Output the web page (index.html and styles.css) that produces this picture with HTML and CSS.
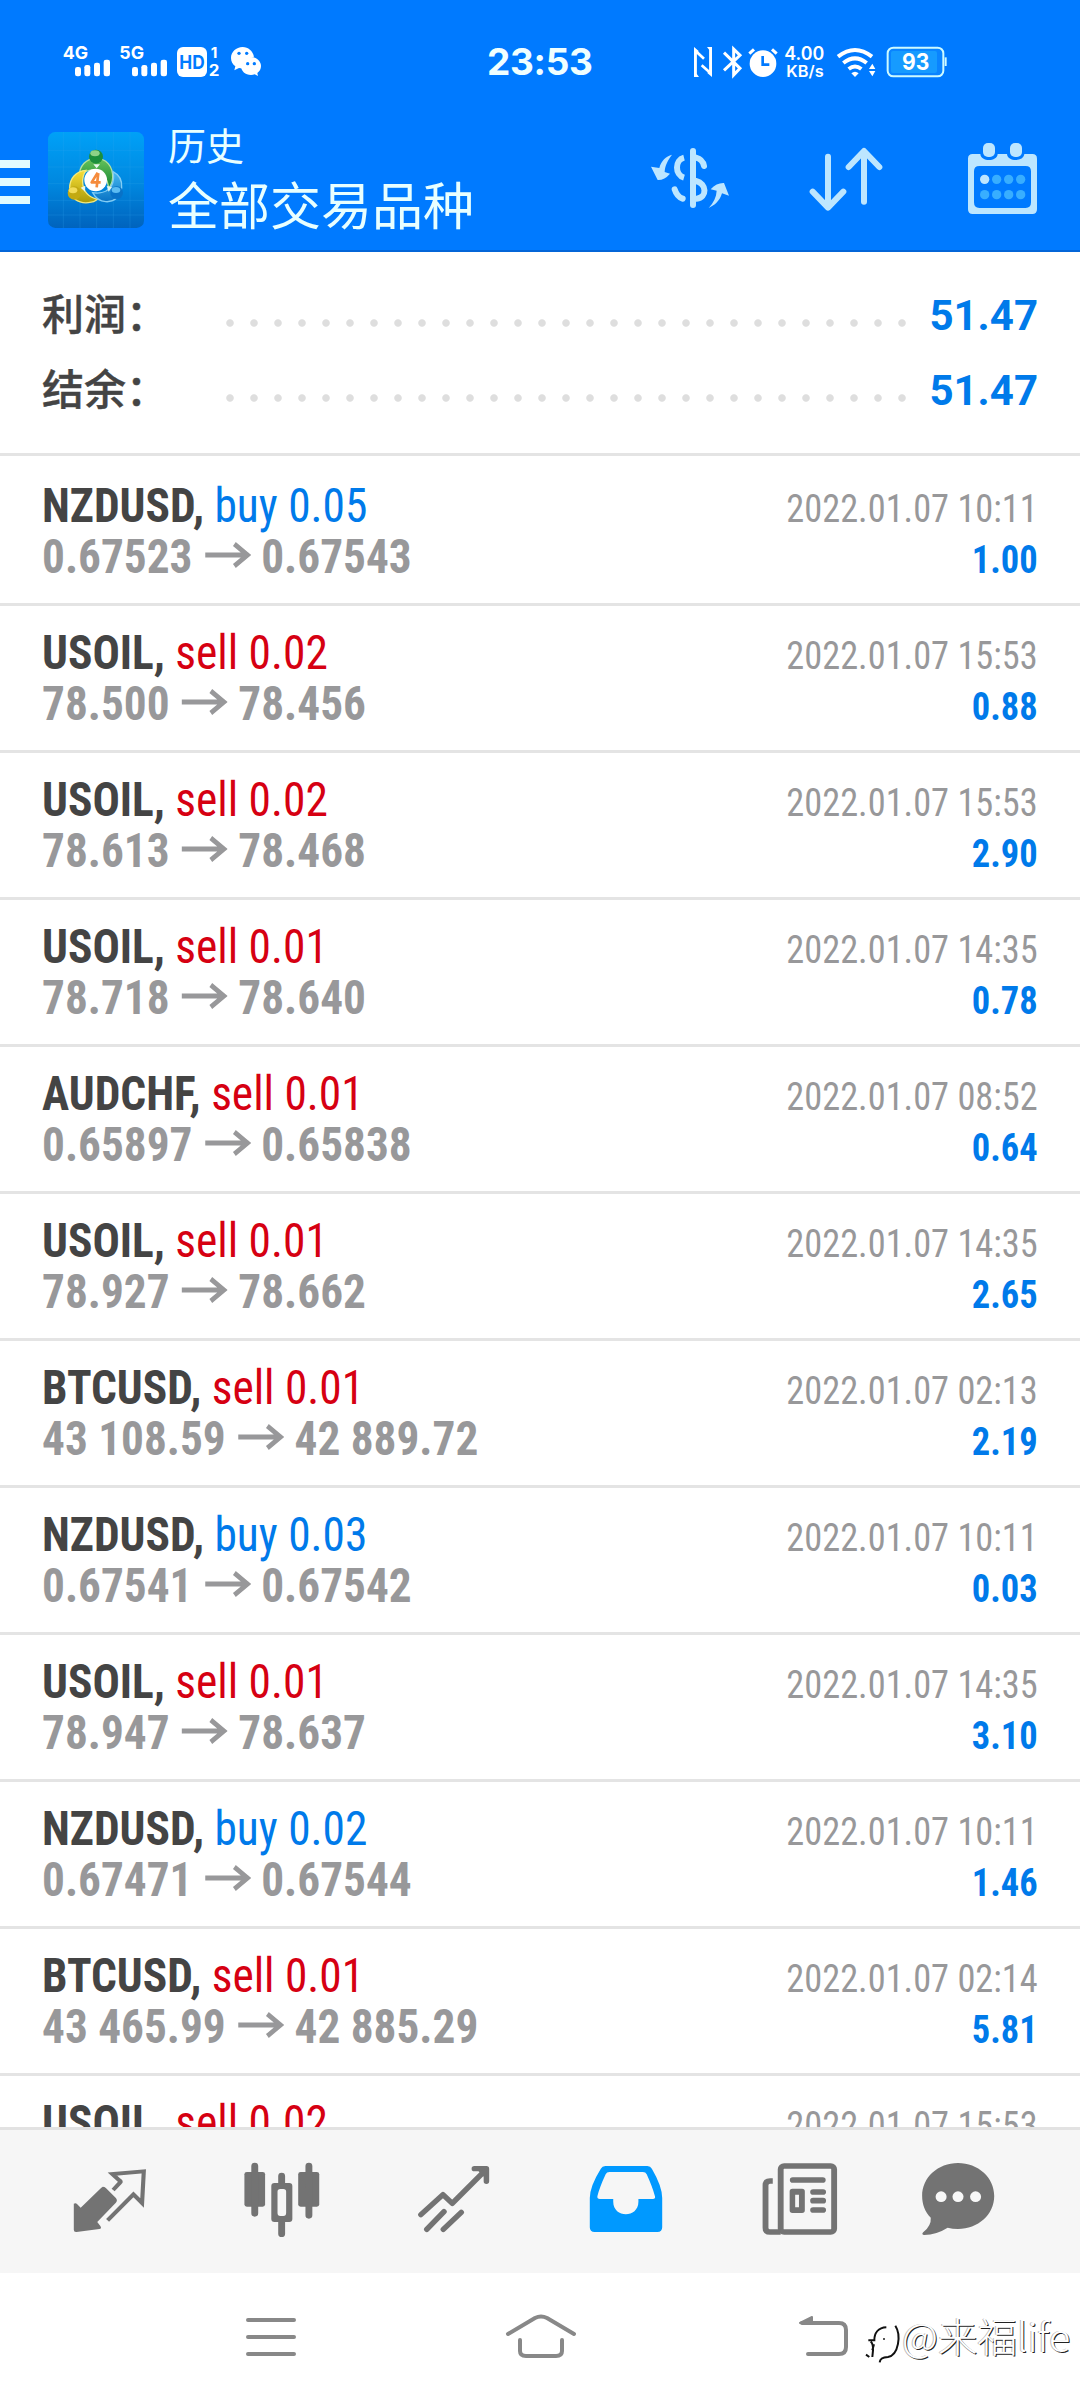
FILE: index.html
```html
<!DOCTYPE html>
<html lang="zh-CN">
<head>
<meta charset="utf-8">
<title>历史</title>
<link rel="stylesheet" href="styles.css">
</head>
<body>
<div class="screen">
  <header class="header">
    <div class="status">
      <svg class="status-left" width="202" height="34" viewBox="183 72 606 102" fill="#fff">
        <text x="188" y="117" font-size="54" textLength="76" lengthAdjust="spacingAndGlyphs" class="din">4G</text>
        <rect x="225" y="141" width="18" height="28" rx="7"/><rect x="253" y="135" width="18" height="34" rx="7"/><rect x="282" y="128" width="18" height="41" rx="7"/><rect x="311" y="119" width="19" height="50" rx="7"/>
        <text x="358" y="117" font-size="54" textLength="74" lengthAdjust="spacingAndGlyphs" class="din">5G</text>
        <rect x="396" y="141" width="18" height="28" rx="7"/><rect x="424" y="135" width="18" height="34" rx="7"/><rect x="453" y="128" width="18" height="41" rx="7"/><rect x="482" y="119" width="19" height="50" rx="7"/>
        <rect x="531" y="81" width="90" height="90" rx="18"/>
        <text x="538" y="146" font-size="56" fill="#007aff" textLength="76" lengthAdjust="spacingAndGlyphs" class="din">HD</text>
        <text x="632" y="115" font-size="44" textLength="20" lengthAdjust="spacingAndGlyphs" class="din">1</text>
        <text x="626" y="168" font-size="46" textLength="32" lengthAdjust="spacingAndGlyphs" class="din">2</text>
        <path d="M728 81c-20 0-35 15-35 33 0 11 5 19 13 25l-3 12 14-7c5 1 9 2 14 1-1-18 12-33 31-35-4-17-17-29-34-29z"/>
        <path d="M753 111c-17 0-30 12-30 27s13 27 30 27c4 0 8-1 11-2l10 5-2-9c7-5 11-12 11-21 0-15-13-27-30-27z"/>
        <g fill="#007aff"><circle cx="717" cy="100" r="5"/><circle cx="740" cy="100" r="5"/><circle cx="743" cy="131" r="5"/><circle cx="763" cy="131" r="5"/></g>
      </svg>
      <span class="clock">23:53</span>
      <svg class="status-right" width="256" height="34" viewBox="156 72 768 102" fill="#fff">
        <path d="M166 171V92l26 24M212 81v79l-27-24" fill="none" stroke="#fff" stroke-width="8"/>
        <path d="M162 81l14 12-6 8v60l7 10h-9l-6-5zM216 171l-14-12 6-8V90l-7-9h9l6 5z"/>
        <path d="M252 98l48 47-19 20V87l19 19-48 45" fill="none" stroke="#fff" stroke-width="9"/>
        <circle cx="369" cy="131" r="40"/><path d="M328 101l14-13M410 101l-14-13" stroke="#fff" stroke-width="9"/>
        <path d="M368 108v26h20" fill="none" stroke="#007aff" stroke-width="8"/>
        <text x="433" y="121" font-size="54" textLength="120" lengthAdjust="spacingAndGlyphs" class="semi">4.00</text>
        <text x="439" y="171" font-size="46" textLength="112" lengthAdjust="spacingAndGlyphs" class="semi">KB/s</text>
        <path d="M594 110q51-40 102 0M610 129q35-28 70 0M626 147q19-15 38 0" fill="none" stroke="#fff" stroke-width="12"/>
        <path d="M634 160q11-9 22 0l-11 11zM687 147l10-16 9 16zM687 153l10 16 9-16z"/>
        <rect x="743" y="83" width="167" height="86" rx="17" fill="#0a84ff" stroke="#cdfaff" stroke-width="6"/>
        <rect x="753" y="93" width="138" height="66" rx="6" fill="#169bff"/>
        <path d="M917 112v26" stroke="#cdfaff" stroke-width="6"/>
        <text x="786" y="150" font-size="68" textLength="82" lengthAdjust="spacingAndGlyphs" class="din">93</text>
      </svg>
    </div>
    <div class="toolbar">
      <div class="burger"><i></i><i></i><i></i></div>
      <svg class="app-icon" width="96" height="96" viewBox="24 21 288 288">
        <defs>
          <linearGradient id="tile" x1="0" y1="0" x2="0" y2="1"><stop offset="0" stop-color="#00a1f7"/><stop offset=".55" stop-color="#0087df"/><stop offset="1" stop-color="#0063bd"/></linearGradient>
          <linearGradient id="green" x1="0" y1="0" x2="0" y2="1"><stop offset="0" stop-color="#67c35b"/><stop offset="1" stop-color="#128533"/></linearGradient>
          <linearGradient id="gold" x1="0" y1="0" x2="0" y2="1"><stop offset="0" stop-color="#f8de38"/><stop offset="1" stop-color="#a99a08"/></linearGradient>
          <linearGradient id="sky" x1="0" y1="0" x2="0" y2="1"><stop offset="0" stop-color="#49baf1"/><stop offset="1" stop-color="#0872c4"/></linearGradient>
        </defs>
        <rect x="24" y="21" width="288" height="288" rx="22" fill="url(#tile)"/>
        <path d="M70 21v288M120 21v288M170 21v288M220 21v288M270 21v288M24 76h288M24 126h288M24 176h288M24 226h288M24 270h288" stroke="#32a7ee" stroke-opacity=".22" stroke-width="3"/>
        <g stroke-width="4">
          <path d="M118 153c0-31 21-53 50-53 30 0 51 23 50 58-1 15-6 25-12 31-4-29-20-49-44-54-16-2-28 4-44 18z" fill="url(#green)" stroke="#b3e1a0"/>
          <path d="M138 136c-30 2-50 25-49 55 0 28 26 45 56 42 13-1 22-5 27-10-27-7-42-24-44-49-1-15 2-26 10-38z" fill="url(#gold)" stroke="#f3e97d"/>
          <path d="M219 140c18 9 28 27 26 49-3 28-25 43-48 41-17-1-31-12-39-27 25 4 47-4 57-22 7-13 7-26 4-41z" fill="url(#sky)" stroke="#82cdf5"/>
        </g>
        <circle cx="168" cy="95" r="21" fill="#1c8f3c"/><ellipse cx="165" cy="85" rx="14" ry="9" fill="#8ed287"/>
        <circle cx="103" cy="204" r="20" fill="#c3aa12"/><ellipse cx="99" cy="196" rx="13" ry="9" fill="#f2dc5a"/>
        <circle cx="230" cy="203" r="19" fill="#0872c7"/><ellipse cx="228" cy="195" rx="13" ry="9" fill="#5cbcf2"/>
        <path d="M160 118h20l-10 12zM122 188l14-6-1 18zM200 183l16 3-10 14z" fill="#e8f7ee"/>
        <circle cx="167" cy="165" r="34" fill="#fff"/>
        <path d="M173 143l-18 29h27M175 144l-5 43" fill="none" stroke="#f58b3c" stroke-width="8" stroke-linejoin="round"/>
      </svg>
      <div class="titles">
        <div class="title">历史</div>
        <div class="subtitle">全部交易品种</div>
      </div>
      <div class="actions">
        <svg width="80" height="72" viewBox="30 366 240 216">
          <g fill="none" stroke="#bde6ff" stroke-width="18" stroke-linecap="round">
            <path d="M159 393V555"/>
            <path d="M168 413q20 5 24 25M168 483c33 8 34 50 2 53M104 508q7 22 24 28"/>
            <path d="M132 413c-28 7-28 52 0 60" stroke-linecap="butt"/>
          </g>
          <path d="M96 404c-18 4-33 19-38 40l-25-4 20 40q20 1 37-19l-16-5c1-20 10-36 22-52z" fill="#bde6ff"/>
          <path d="M206 564c18-8 33-21 40-44l21 7-15-38q-22-1-40 19l18 4c-1 19-9 36-24 52z" fill="#bde6ff"/>
        </svg>
        <svg width="76" height="72" viewBox="504 366 228 216">
          <path d="M564 410V562M518 515l46 48 46-48M672 545V394M626 441l46-48 46 48" fill="none" stroke="#bde6ff" stroke-width="18" stroke-linecap="round" stroke-linejoin="round"/>
        </svg>
        <svg width="71" height="72" viewBox="981 366 213 216">
          <path d="M998 402h23c2 24 50 24 52 0h28c2 24 50 24 52 0h24q14 0 14 14v152q0 14-14 14H998q-14 0-14-14V416q0-14 14-14zM1018 438q-16 0-16 16v93q0 17 16 17h139q16 0 16-17v-93q0-16-16-16z" fill="#bde6ff" fill-rule="evenodd"/>
          <rect x="1029" y="369" width="36" height="42" rx="15" fill="#bde6ff"/><rect x="1110" y="369" width="36" height="42" rx="15" fill="#bde6ff"/>
          <circle cx="1034" cy="478" r="14" fill="#bde6ff"/>
          <g fill="#38aeff"><circle cx="1070" cy="478" r="14"/><circle cx="1106" cy="478" r="14"/><circle cx="1142" cy="478" r="14"/><circle cx="1034" cy="524" r="14"/><circle cx="1070" cy="524" r="14"/><circle cx="1106" cy="524" r="14"/><circle cx="1142" cy="524" r="14"/></g>
        </svg>
      </div>
    </div>
  </header>

  <section class="summary">
    <div class="sum-row"><span class="label">利润：</span><span class="dots"></span><span class="total">51.47</span></div>
    <div class="sum-row"><span class="label">结余：</span><span class="dots"></span><span class="total">51.47</span></div>
  </section>

  <svg class="defs" width="0" height="0"><symbol id="arrow" viewBox="0 0 49 26" preserveAspectRatio="none"><path d="M0 13H46M31 2L45 13L31 24" fill="none" stroke="#98989a" stroke-width="4.8"/></symbol></svg>
  <main class="list">
    <div class="deal"><div class="line"><span class="order"><b>NZDUSD,</b> <span class="buy">buy 0.05</span></span><time>2022.01.07 10:11</time></div><div class="line"><span class="price">0.67523<svg class="arrow"><use href="#arrow"/></svg>0.67543</span><span class="profit">1.00</span></div></div>
    <div class="deal"><div class="line"><span class="order"><b>USOIL,</b> <span class="sell">sell 0.02</span></span><time>2022.01.07 15:53</time></div><div class="line"><span class="price">78.500<svg class="arrow"><use href="#arrow"/></svg>78.456</span><span class="profit">0.88</span></div></div>
    <div class="deal"><div class="line"><span class="order"><b>USOIL,</b> <span class="sell">sell 0.02</span></span><time>2022.01.07 15:53</time></div><div class="line"><span class="price">78.613<svg class="arrow"><use href="#arrow"/></svg>78.468</span><span class="profit">2.90</span></div></div>
    <div class="deal"><div class="line"><span class="order"><b>USOIL,</b> <span class="sell">sell 0.01</span></span><time>2022.01.07 14:35</time></div><div class="line"><span class="price">78.718<svg class="arrow"><use href="#arrow"/></svg>78.640</span><span class="profit">0.78</span></div></div>
    <div class="deal"><div class="line"><span class="order"><b>AUDCHF,</b> <span class="sell">sell 0.01</span></span><time>2022.01.07 08:52</time></div><div class="line"><span class="price">0.65897<svg class="arrow"><use href="#arrow"/></svg>0.65838</span><span class="profit">0.64</span></div></div>
    <div class="deal"><div class="line"><span class="order"><b>USOIL,</b> <span class="sell">sell 0.01</span></span><time>2022.01.07 14:35</time></div><div class="line"><span class="price">78.927<svg class="arrow"><use href="#arrow"/></svg>78.662</span><span class="profit">2.65</span></div></div>
    <div class="deal"><div class="line"><span class="order"><b>BTCUSD,</b> <span class="sell">sell 0.01</span></span><time>2022.01.07 02:13</time></div><div class="line"><span class="price">43 108.59<svg class="arrow"><use href="#arrow"/></svg>42 889.72</span><span class="profit">2.19</span></div></div>
    <div class="deal"><div class="line"><span class="order"><b>NZDUSD,</b> <span class="buy">buy 0.03</span></span><time>2022.01.07 10:11</time></div><div class="line"><span class="price">0.67541<svg class="arrow"><use href="#arrow"/></svg>0.67542</span><span class="profit">0.03</span></div></div>
    <div class="deal"><div class="line"><span class="order"><b>USOIL,</b> <span class="sell">sell 0.01</span></span><time>2022.01.07 14:35</time></div><div class="line"><span class="price">78.947<svg class="arrow"><use href="#arrow"/></svg>78.637</span><span class="profit">3.10</span></div></div>
    <div class="deal"><div class="line"><span class="order"><b>NZDUSD,</b> <span class="buy">buy 0.02</span></span><time>2022.01.07 10:11</time></div><div class="line"><span class="price">0.67471<svg class="arrow"><use href="#arrow"/></svg>0.67544</span><span class="profit">1.46</span></div></div>
    <div class="deal"><div class="line"><span class="order"><b>BTCUSD,</b> <span class="sell">sell 0.01</span></span><time>2022.01.07 02:14</time></div><div class="line"><span class="price">43 465.99<svg class="arrow"><use href="#arrow"/></svg>42 885.29</span><span class="profit">5.81</span></div></div>
    <div class="deal"><div class="line"><span class="order"><b>USOIL,</b> <span class="sell">sell 0.02</span></span><time>2022.01.07 15:53</time></div></div>
  </main>

  <nav class="tabs">
    <svg viewBox="204 300 232 234" preserveAspectRatio="none">
      <path d="M299 380q5 0 9 4l29 30q6 8 0 14l-54 58 9 12q5 8-3 9l-66 9q-8 1-8-7v-78q6-4 10 2l10 10 59-59z" fill="#737373"/>
      <path d="M329 390l20-22q5-3-2-7l-20-19 91-8-5 95-25-26-75 78" fill="none" stroke="#737373" stroke-width="12"/>
    </svg>
    <svg viewBox="702 300 232 234" preserveAspectRatio="none">
      <g fill="#737373"><rect x="709" y="336" width="60" height="104" rx="7"/><rect x="865" y="336" width="61" height="104" rx="7"/></g>
      <path d="M739 318V460M896 318V466M817 348V374M817 480V521" stroke="#737373" stroke-width="20" stroke-linecap="round"/>
      <path d="M796 369h43q9 0 9 9v99q0 9-9 9h-43q-9 0-9-9v-99q0-9 9-9zM813 387q-8 0-8 8v64q0 9 8 9h9q8 0 8-9v-64q0-8-8-8z" fill="#737373" fill-rule="evenodd"/>
    </svg>
    <svg viewBox="1201 300 232 234" preserveAspectRatio="none">
      <path d="M1221 464l64-60 27 26 92-95M1376 326h35v38M1238 508l50-53M1286 508l52-51" fill="none" stroke="#737373" stroke-width="16" stroke-linecap="round" stroke-linejoin="round"/>
      <path d="M1388 334l24-7v32z" fill="#737373"/>
    </svg>
    <svg viewBox="135 300 232 234" preserveAspectRatio="none">
      <path d="M191 318h122q9 0 13 8 30 53 30 88v88q0 14-14 14H160q-14 0-14-14v-88q0-35 32-88 4-8 13-8zM203 336q-8 0-11 7-18 40-24 66-1 8 7 8h39v8c0 50 73 50 73 0v-8h42q8 0 6-8-8-30-24-66-3-7-11-7z" fill="#0099ff" fill-rule="evenodd"/>
    </svg>
    <svg class="news" viewBox="639 300 232 234" preserveAspectRatio="none">
      <g fill="none" stroke="#737373" stroke-width="17">
        <rect x="699" y="318" width="155" height="198" rx="10"/>
        <path d="M676 363h-8q-13 0-13 13v127q0 13 13 13h31"/>
        <path d="M734 360h87M793 396h29M793 422h29M793 450h29" stroke-linecap="round"/>
      </g>
      <path d="M733 386h28q8 0 8 8v57q0 8-8 8h-28q-8 0-8-8v-57q0-8 8-8zM741 404v38h11v-38z" fill="#737373" fill-rule="evenodd"/>
    </svg>
    <svg viewBox="1097 300 232 234" preserveAspectRatio="none">
      <path d="M1213 309c58 0 105 43 105 99s-47 99-105 99q-16 0-30-4-32 21-68 22-9-1-3-8 24-20 22-44c-17-17-25-40-25-65 0-56 46-99 104-99z" fill="#737373"/>
      <g fill="#f8f8f8"><circle cx="1164" cy="410" r="16"/><circle cx="1213" cy="410" r="16"/><circle cx="1264" cy="410" r="16"/></g>
    </svg>
  </nav>

  <footer class="sysnav">
    <svg width="54" height="48" viewBox="0 0 54 48" fill="none" stroke="#888" stroke-width="4" stroke-linecap="round"><path d="M4 7H50M4 24H50M4 41H50"/></svg>
    <svg width="74" height="48" viewBox="0 0 74 48" fill="none" stroke="#888" stroke-width="4" stroke-linecap="round" stroke-linejoin="round"><path d="M4 21L31 5Q37 2 43 5L70 21M16 27V38Q16 43 22 43H52Q58 43 58 38V27"/></svg>
    <svg width="56" height="48" viewBox="0 0 56 48" fill="none" stroke="#888" stroke-width="4" stroke-linecap="round" stroke-linejoin="round"><path d="M6 10H43Q50 10 50 17V34Q50 41 43 41H12"/><path d="M4 10L16 4V10Z" fill="#888" stroke-width="2"/></svg>
    <div class="watermark">
      <svg width="36" height="44" viewBox="45 70 108 132" fill="none" stroke="#111" stroke-width="6"><path d="M55 122h18c0-22 12-38 36-39M62 126q8 6 7 26l-2 20M48 165l10 7M72 134l-5 18M136 78c18 28 10 88-22 94-16 1-24 4-25 16"/><circle cx="102" cy="118" r="2" fill="#111" stroke-width="2"/></svg>
      <span>@来福life</span>
    </div>
  </footer>
</div>
</body>
</html>
```
FILE: styles.css
```css
* { box-sizing: border-box; }
body { margin: 0; background: #fff; font-family: Roboto, "Noto Sans CJK SC", sans-serif; }
svg { display: block; flex: none; overflow: visible; }
.screen { position: relative; width: 1080px; height: 2400px; display: flex; flex-direction: column; overflow: hidden; }

.header { height: 252px; flex: none; background: #007aff; border-bottom: 2px solid #0466d8; }
.status { height: 116px; padding: 44px 0 0 61px; display: flex; align-items: flex-start; }
.din { font-family: Inter, sans-serif; font-weight: 700; }
.semi { font-family: Inter, sans-serif; font-weight: 600; }
.clock { width: 107px; margin: -5px 0 0 224px; font: 650 37px/46px Inter, sans-serif; letter-spacing: -0.3px; color: #f0ffff; white-space: nowrap; }
.status-right { margin-left: 98px; }
.toolbar { height: 134px; display: flex; align-items: flex-start; }
.burger { width: 30px; padding-top: 44px; display: flex; flex-direction: column; gap: 10px; }
.burger i { height: 8px; background: #e2fbff; }
.app-icon { margin: 16px 0 0 18px; }
.titles { margin: 5px 0 0 24px; flex: 1; color: #e8ffff; font-family: "Noto Sans CJK SC", sans-serif; white-space: nowrap; }
.title { font-size: 38px; line-height: 46px; }
.subtitle { font-size: 51px; line-height: 73px; }
.actions { display: flex; padding: 26px 42px 0 0; }
.actions svg:nth-child(2) { margin-left: 78px; }
.actions svg:nth-child(3) { margin-left: 83px; }

.summary { height: 204px; flex: none; padding: 24px 42px 0 42px; border-bottom: 3px solid #e4e4e4; }
.sum-row { height: 75px; display: flex; align-items: center; }
.label { width: 182px; margin-top: -5px; font: 500 42px/75px "Noto Sans CJK SC", sans-serif; color: #444; -webkit-text-stroke: 0.4px #444; }
.dots { width: 696px; height: 8px; margin-top: 18px; background: radial-gradient(circle at 6px 4px, #dedede 3.3px, transparent 4.2px) 0 0 / 24px 8px; }
.total { margin: 3px 0 0 auto; font: 700 42px/75px Roboto, sans-serif; color: #007aea; }

.defs { position: absolute; }
.list { flex: 1; overflow: hidden; padding-top: 3px; font-family: "Roboto Condensed", Roboto, sans-serif; }
.deal { height: 147px; padding: 21px 42px 0 42px; border-bottom: 3px solid #e4e4e4; }
.line { height: 51px; display: flex; justify-content: space-between; align-items: baseline; font-size: 48px; line-height: 51px; white-space: pre; }
.order { transform: scaleX(0.946); transform-origin: left; }
.line b { color: #444; }
.buy { color: #007aea; }
.sell { color: #d60012; }
.price { color: #98989a; font-weight: 700; transform: scaleX(0.943); transform-origin: left; }
.arrow { display: inline-block; width: 49px; height: 26px; margin: 0 11px 0 13px; vertical-align: 5px; }
.line time { font-size: 39px; color: #98989a; transform: scaleX(0.932); transform-origin: right; }
.profit { font-size: 38px; font-weight: 700; color: #007aea; transform: scaleX(0.96); transform-origin: right; }

.tabs { height: 146px; flex: none; display: flex; gap: 92px; padding: 30px 0 0 70px; background: #f6f6f6; border-top: 3px solid #e2e2e2; }
.tabs svg { width: 80px; height: 78px; }
.tabs .news { margin-left: 2px; }
.tabs svg:last-child { margin-left: -14px; }
.sysnav { height: 127px; flex: none; padding: 40px 0 0 244px; display: flex; background: #fff; }
.sysnav > svg:nth-child(2) { margin-left: 206px; }
.sysnav > svg:nth-child(3) { margin-left: 218px; }
.watermark { position: absolute; left: 865px; top: 2312px; display: flex; }
.watermark svg { margin-top: 11px; }
.watermark span { margin-left: 1px; font: 300 39.5px/46px "Noto Sans CJK SC", sans-serif; color: #fff; text-shadow: 1px 1px 0 #222, -1px 0 0 #bbb; white-space: nowrap; }
```
